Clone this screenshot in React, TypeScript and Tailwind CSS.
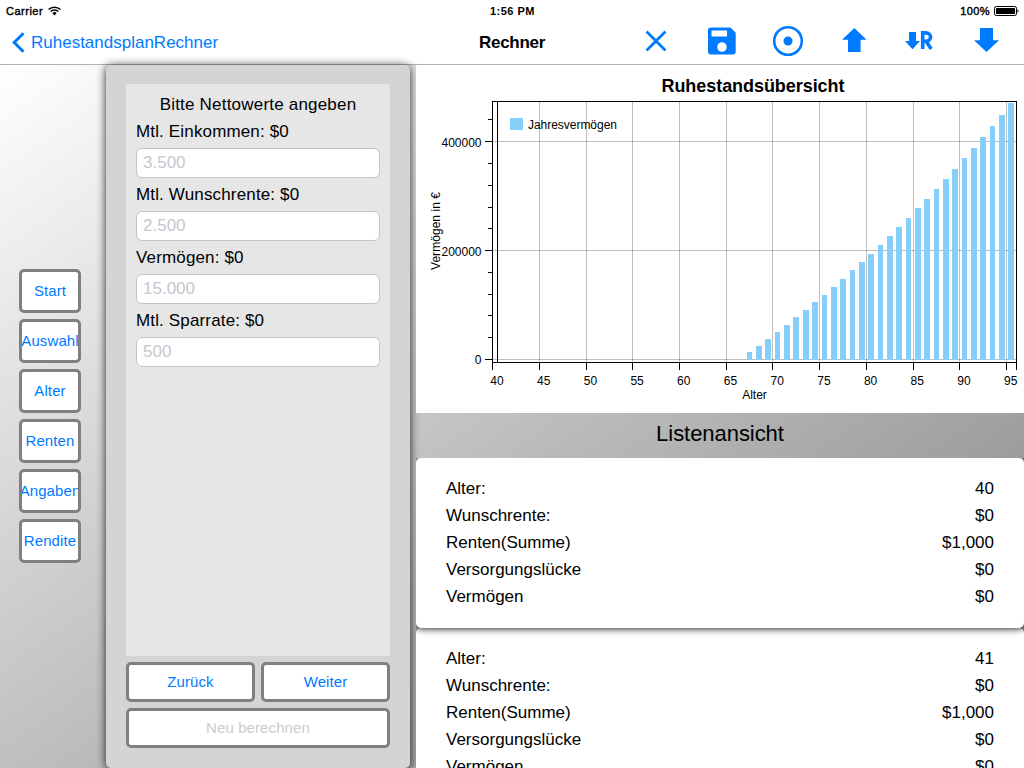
import React from 'react';

const sections = ['Start', 'Auswahl', 'Alter', 'Renten', 'Angaben', 'Rendite'];

const fields = [
  { label: 'Mtl. Einkommen: $0', placeholder: '3.500' },
  { label: 'Mtl. Wunschrente: $0', placeholder: '2.500' },
  { label: 'Vermögen: $0', placeholder: '15.000' },
  { label: 'Mtl. Sparrate: $0', placeholder: '500' },
];

const years = [
  { age: 40, pension: '$1,000' },
  { age: 41, pension: '$1,000' },
];

// [x, top, width] of each yearly bar, all of them stand on y = 360
const bars = [
  [747, 352, 5], [756, 346, 6], [765, 339, 6], [775, 332, 5], [784, 325, 6], [793, 317, 6],
  [803, 310, 6], [812, 302, 6], [822, 295, 5], [831, 287, 6], [840, 279, 6], [850, 270, 5],
  [859, 262, 6], [868, 254, 6], [878, 245, 5], [887, 236, 6], [896, 227, 6], [906, 218, 5],
  [915, 208, 6], [924, 199, 6], [934, 189, 5], [943, 179, 6], [952, 169, 6], [962, 158, 5],
  [971, 148, 6], [980, 137, 6], [990, 126, 5], [999, 115, 6], [1008, 103, 6],
];

const gridX = [539, 586, 632, 679, 726, 772, 819, 866, 913, 959, 1006];
const gridY = [141, 250, 359];
const minorY = [119, 163, 185, 207, 228, 272, 294, 315, 337];

const StatusBar = () => (
  <div className="flex h-5 items-center justify-between pl-1.5 pr-[5px] pt-[2px] text-[11px]">
    <div className="flex w-40 items-center gap-[5px]">
      <span className="tracking-[0.5px] [-webkit-text-stroke:0.4px_black]">Carrier</span>
      <svg width="13" height="10" viewBox="0 0 13 10" fill="none" stroke="black" strokeWidth="1.4">
        <path d="M.6 3.6a8.4 8.4 0 0 1 11.8 0M2.6 5.6a5.6 5.6 0 0 1 7.8 0" />
        <path d="M4.3 7.1a3.2 3.2 0 0 1 4.4 0L6.5 9.4z" fill="black" stroke="none" />
      </svg>
    </div>
    <span className="font-bold tracking-[0.5px]">1:56 PM</span>
    <div className="flex w-40 items-center justify-end gap-1">
      <span className="tracking-[0.4px] [-webkit-text-stroke:0.4px_black]">100%</span>
      <svg width="25" height="10" viewBox="0 0 25 10">
        <rect x=".5" y=".5" width="22" height="9" rx="1.8" fill="none" stroke="black" />
        <rect x="2" y="2" width="19" height="6" rx=".6" />
        <path d="M23.5 3.2c1.4.6 1.4 3 0 3.6z" />
      </svg>
    </div>
  </div>
);

const Toolbar = () => (
  <svg width="384" height="44" viewBox="640 20 384 44" fill="#007aff">
    <path d="M646.5 31.5l19 19M665.5 31.5l-19 19" stroke="#007aff" strokeWidth="2.8" />
    <path
      fillRule="evenodd"
      d="M711 27.5h19.5l5.2 5.2v18.8a3 3 0 0 1-3 3H711a3 3 0 0 1-3-3v-21a3 3 0 0 1 3-3zM711.5 30.5v6H727v-6zM722 42.2a4.8 4.8 0 1 0 0 9.6a4.8 4.8 0 0 0 0-9.6z"
    />
    <circle cx="788" cy="41" r="13.8" fill="none" stroke="#007aff" strokeWidth="2.6" />
    <circle cx="788" cy="41" r="4.5" />
    <path d="M854.3 28l12.3 11.8h-6V52H848V39.8h-6z" />
    <path d="M909 32h7v9h4l-7.5 8.2-7.5-8.2h4z" />
    <path
      d="M922.7 49V32.900h3c6.500 0 6.500 8.400 0 8.400h-2M926 41l5.200 8"
      fill="none"
      stroke="#007aff"
      strokeWidth="3.600"
    />
    <path d="M980 28h13v12.200h6L986.500 52 974 40.200h6z" />
  </svg>
);

const Chart = () => (
  <svg className="block bg-white" width="608" height="348" viewBox="416 65 608 348" fontSize="12">
    <text x="661.5" y="92" fontSize="18" fontWeight="bold" textLength="183">Ruhestandsübersicht</text>
    <g shapeRendering="crispEdges">
      {gridX.map((x) => (
        <rect key={x} x={x} y="102" width="1" height="260" fillOpacity="0.25" />
      ))}
      {gridY.map((y) => (
        <rect key={y} x="493" y={y} width="523" height="1" fillOpacity="0.25" />
      ))}
      {bars.map(([x, y, w]) => (
        <rect key={x} x={x} y={y} width={w} height={360 - y} fill="#87cefa" />
      ))}
      <path d="M492.5 370V101.5H1016.5V370M492 362.5H1017M497.5 101V362" fill="none" stroke="black" />
      {gridX.map((x) => (
        <rect key={x} x={x} y="362" width="1" height="8" />
      ))}
      {gridY.map((y) => (
        <rect key={y} x="485" y={y} width="8" height="1" />
      ))}
      {minorY.map((y) => (
        <rect key={y} x="488" y={y} width="5" height="1" />
      ))}
      <rect x="510" y="118" width="13" height="12" fill="#87cefa" />
    </g>
    <text x="528" y="129" textLength="89">Jahresvermögen</text>
    <text x="481.5" y="147" textAnchor="end">400000</text>
    <text x="481.5" y="256" textAnchor="end">200000</text>
    <text x="481.5" y="364" textAnchor="end">0</text>
    {[40, 45, 50, 55, 60, 65, 70, 75, 80, 85, 90, 95].map((age, i) => (
      <text key={age} x={497 + i * 46.7} y="385" textAnchor="middle">{age}</text>
    ))}
    <text x="754.5" y="399" textAnchor="middle">Alter</text>
    <text transform="translate(439.5 231) rotate(-90)" textAnchor="middle" textLength="78">Vermögen in €</text>
  </svg>
);

const buttonClass =
  'flex items-center justify-center overflow-hidden whitespace-nowrap rounded-[5px] border-[3px] border-[#808080] bg-white text-[15px] tracking-[0.1px]';

const Row = ({ label, value }: { label: string; value: string | number }) => (
  <div className="flex h-[27px] items-center justify-between">
    <span>{label}</span>
    <span>{value}</span>
  </div>
);

export default function App() {
  return (
    <div className="h-[768px] w-[1024px] overflow-hidden bg-white font-['Helvetica_Neue','Liberation_Sans',sans-serif] text-black">
      <header className="h-[65px] border-b border-[#b2b2b2]">
        <StatusBar />
        <div className="flex h-11 items-center">
          <button className="flex w-[416px] items-center gap-[6px] pl-3 text-[17px] text-[#007aff]">
            <svg width="13" height="21" viewBox="0 0 13 21" fill="none" stroke="#007aff" strokeWidth="3">
              <path d="M11.5 1.2L2.2 10.5l9.3 9.3" />
            </svg>
            <span className="pt-px">RuhestandsplanRechner</span>
          </button>
          <h1 className="w-[192px] pt-px text-center text-[17px] font-bold tracking-[-0.3px]">Rechner</h1>
          <div className="ml-8">
            <Toolbar />
          </div>
        </div>
      </header>

      <div className="flex h-[703px] bg-linear-to-br/srgb from-white to-[#808080]">
        <nav className="flex w-[106px] flex-col gap-1.5 pl-[19px] pt-[204px]">
          {sections.map((name) => (
            <button key={name} className={`${buttonClass} h-11 w-[62px] text-[#007aff]`}>{name}</button>
          ))}
        </nav>

        <section className="flex w-[304px] flex-col rounded-[5px] bg-[#d4d4d4] px-5 pb-5 pt-[19px] shadow-[0_1px_10px_rgba(0,0,0,0.85)]">
          <div className="h-[572px] bg-[#e6e6e6] px-2.5 pt-[7px]">
            <p className="h-[27px] text-center text-[17px] leading-[27px] tracking-[0.2px]">Bitte Nettowerte angeben</p>
            {fields.map((field) => (
              <label key={field.label} className="block h-[63px] text-[17px]">
                <span className="block h-[30px] leading-[27px] tracking-[0.15px]">{field.label}</span>
                <input
                  className="block h-[30px] w-full rounded-[6px] border border-[#c4c4c4] bg-white px-1.5 placeholder:text-[#c7c7cd]"
                  placeholder={field.placeholder}
                />
              </label>
            ))}
          </div>
          <div className="mt-1.5 grid grid-cols-2 gap-1.5">
            <button className={`${buttonClass} h-10 text-[#007aff]`}>Zurück</button>
            <button className={`${buttonClass} h-10 text-[#007aff]`}>Weiter</button>
            <button className={`${buttonClass} col-span-2 h-10 text-[#cccccc]`} disabled>Neu berechnen</button>
          </div>
        </section>

        <main className="ml-1.5 w-[608px] overflow-hidden">
          <Chart />
          <h2 className="h-[45px] text-center text-[22px] leading-[41px] tracking-[-0.05px]">Listenansicht</h2>
          {years.map((year, i) => (
            <div
              key={year.age}
              className={`relative h-[170px] rounded-[5px] bg-white px-[30px] pt-[17px] text-[17px] ${i === 0 ? 'z-10 shadow-[0_1px_7px_rgba(0,0,0,0.85)] [clip-path:inset(0_0_-12px_0)]' : ''}`}
            >
              <Row label="Alter:" value={year.age} />
              <Row label="Wunschrente:" value="$0" />
              <Row label="Renten(Summe)" value={year.pension} />
              <Row label="Versorgungslücke" value="$0" />
              <Row label="Vermögen" value="$0" />
            </div>
          ))}
        </main>
      </div>
    </div>
  );
}
